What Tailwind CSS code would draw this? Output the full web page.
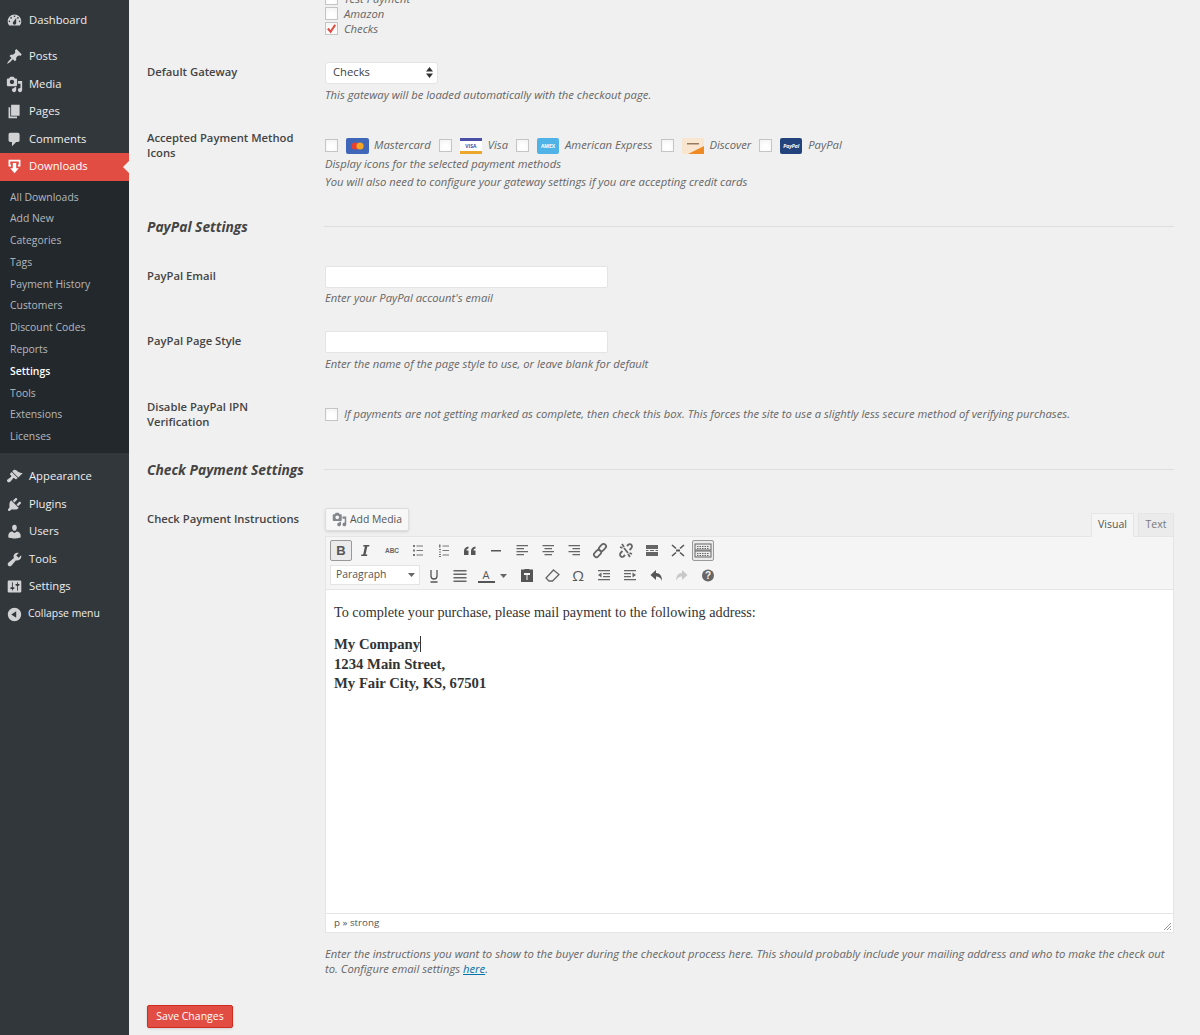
<!DOCTYPE html>
<html lang="en">
<head>
    <meta charset="UTF-8">
    <title>Payment Gateways</title>
    <script src="https://cdn.jsdelivr.net/npm/@tailwindcss/browser@4"></script>
</head>
<body class="bg-[#f0f0f0] font-['Open_Sans',sans-serif] text-[#444] h-[1035px] overflow-hidden">
<div class="flex h-[1035px]">
    <!-- Sidebar -->
    <aside class="w-[129px] shrink-0 bg-[#32373c] text-[#eee] text-[11.25px] pt-[6.5px]">
        <a class="flex items-center h-[27.5px] pl-[6px] gap-[6px]"><svg class="w-[17px] h-[17px] fill-[#d0d2d4]" viewBox="0 0 20 20"><path d="M3.76 16h12.48c1.1-1.37 1.76-3.11 1.76-5 0-4.42-3.58-8-8-8s-8 3.58-8 8c0 1.89.66 3.63 1.76 5zM10 4c.55 0 1 .45 1 1s-.45 1-1 1-1-.45-1-1 .45-1 1-1zM6 6c.55 0 1 .45 1 1s-.45 1-1 1-1-.45-1-1 .45-1 1-1zm8 0c.55 0 1 .45 1 1s-.45 1-1 1-1-.45-1-1 .45-1 1-1zm-5.37 5.55L12 7v6c0 1.1-.9 2-2 2s-2-.9-2-2c0-.57.24-1.08.63-1.45zM4 10c.55 0 1 .45 1 1s-.45 1-1 1-1-.45-1-1 .45-1 1-1zm12 0c.55 0 1 .45 1 1s-.45 1-1 1-1-.45-1-1 .45-1 1-1z"/></svg>Dashboard</a>
        <div class="h-[9px]"></div>
        <a class="flex items-center h-[27.5px] pl-[6px] gap-[6px]"><svg class="w-[17px] h-[17px] fill-[#d0d2d4]" viewBox="0 0 20 20"><path d="M10.44 3.02l1.82-1.82 6.36 6.35-1.83 1.82c-1.05-.68-2.48-.57-3.41.36l-.75.75c-.92.93-1.04 2.35-.35 3.41l-1.83 1.82-2.41-2.41-2.8 2.79c-.42.42-3.38 2.71-3.8 2.29s1.86-3.39 2.28-3.81l2.79-2.79L4.1 9.36l1.83-1.82c1.05.69 2.48.57 3.4-.36l.75-.75c.93-.92 1.05-2.35.36-3.41z"/></svg>Posts</a>
        <a class="flex items-center h-[27.5px] pl-[6px] gap-[6px]"><svg class="w-[17px] h-[17px] fill-[#d0d2d4]" viewBox="0 0 20 20"><path d="M13 11V4c0-.55-.45-1-1-1h-1.67L9 1H5L3.67 3H2c-.55 0-1 .45-1 1v7c0 .55.45 1 1 1h10c.55 0 1-.45 1-1zM7 4.5c1.38 0 2.5 1.12 2.5 2.5S8.38 9.5 7 9.5 4.5 8.38 4.5 7 5.62 4.5 7 4.5zM14 6h5v10.5c0 1.38-1.12 2.5-2.5 2.5S14 17.88 14 16.5s1.12-2.5 2.5-2.5c.17 0 .34.02.5.05V9h-3V6zm-4 8.05V13h2v3.5c0 1.38-1.12 2.5-2.5 2.5S7 17.88 7 16.5 8.12 14 9.5 14c.17 0 .34.02.5.05z"/></svg>Media</a>
        <a class="flex items-center h-[27.5px] pl-[6px] gap-[6px]"><svg class="w-[17px] h-[17px] fill-[#d0d2d4]" viewBox="0 0 20 20"><path d="M6 15V2h10v13H6zm-1 1h8v2H3V5h2v11z"/></svg>Pages</a>
        <a class="flex items-center h-[27.5px] pl-[6px] gap-[6px]"><svg class="w-[17px] h-[17px] fill-[#d0d2d4]" viewBox="0 0 20 20"><path d="M5 2h9c1.1 0 2 .9 2 2v7c0 1.1-.9 2-2 2h-2l-5 5v-5H5c-1.1 0-2-.9-2-2V4c0-1.1.9-2 2-2z"/></svg>Comments</a>
        <a class="relative flex items-center h-[27.5px] pl-[6px] gap-[6px] bg-[#e14d43] text-white"><svg class="w-[17px] h-[17px] fill-white" viewBox="0 0 20 20"><path d="M3 2h14v8h-3V8h1V4H5v4h1v2H3zM8 6h4v6h3l-5 6-5-6h3z"/></svg>Downloads<span class="absolute right-0 top-[8px] border-y-[6px] border-y-transparent border-r-[6px] border-r-[#f0f0f0]"></span></a>
        <!-- Downloads submenu -->
        <ul class="bg-[#23282d] pt-[6px] pb-[6px] text-[10.4px] text-[#b4b9be] h-[272.5px]">
            <li class="h-[21.8px] leading-[21.8px] pl-[10px]">All Downloads</li>
            <li class="h-[21.8px] leading-[21.8px] pl-[10px]">Add New</li>
            <li class="h-[21.8px] leading-[21.8px] pl-[10px]">Categories</li>
            <li class="h-[21.8px] leading-[21.8px] pl-[10px]">Tags</li>
            <li class="h-[21.8px] leading-[21.8px] pl-[10px]">Payment History</li>
            <li class="h-[21.8px] leading-[21.8px] pl-[10px]">Customers</li>
            <li class="h-[21.8px] leading-[21.8px] pl-[10px]">Discount Codes</li>
            <li class="h-[21.8px] leading-[21.8px] pl-[10px]">Reports</li>
            <li class="h-[21.8px] leading-[21.8px] pl-[10px] font-semibold text-white">Settings</li>
            <li class="h-[21.8px] leading-[21.8px] pl-[10px]">Tools</li>
            <li class="h-[21.8px] leading-[21.8px] pl-[10px]">Extensions</li>
            <li class="h-[21.8px] leading-[21.8px] pl-[10px]">Licenses</li>
        </ul>
        <div class="h-[10px]"></div>
        <a class="flex items-center h-[27.5px] pl-[6px] gap-[6px]"><svg class="w-[17px] h-[17px] fill-[#d0d2d4]" viewBox="0 0 20 20"><path d="M14.48 11.06L7.41 3.99l1.5-1.5c.5-.56 2.3-.47 3.51.32 1.21.8 1.43 1.28 2.91 2.1 1.18.64 2.45 1.26 4.45.85zm-.71.71L6.7 4.7 4.93 6.47c-.39.39-.39 1.02 0 1.41l1.06 1.06c.39.39.39 1.03 0 1.42-.6.6-1.43 1.11-2.21 1.69-.35.26-.7.53-1.01.84C1.43 13.23.4 14.75 1.77 16.12c1.37 1.37 2.89.34 4.15-.92.31-.31.58-.66.84-1.01.58-.78 1.09-1.61 1.69-2.21.39-.39 1.03-.39 1.42 0l1.06 1.06c.39.39 1.02.39 1.41 0z"/></svg>Appearance</a>
        <a class="flex items-center h-[27.5px] pl-[6px] gap-[6px]"><svg class="w-[17px] h-[17px] fill-[#d0d2d4]" viewBox="0 0 20 20"><path d="M13.11 4.36L9.87 7.6 8 5.73l3.24-3.24c.35-.34 1.05-.2 1.56.32.52.51.66 1.21.31 1.55zm-8 1.77l.91-1.12 9.01 9.01-1.19.84c-.71.71-2.63 1.16-3.82 1.16H6.14L4.9 17.26c-.59.59-1.54.59-2.12 0-.59-.58-.59-1.53 0-2.12l1.24-1.24v-3.88c0-1.13.4-3.19 1.09-3.89zm7.26 3.97l3.24-3.24c.34-.35 1.04-.21 1.55.31.52.51.66 1.21.31 1.55l-3.24 3.25z"/></svg>Plugins</a>
        <a class="flex items-center h-[27.5px] pl-[6px] gap-[6px]"><svg class="w-[17px] h-[17px] fill-[#d0d2d4]" viewBox="0 0 20 20"><path d="M10 9.25c-2.27 0-2.73-3.44-2.73-3.44C7 4.02 7.82 2 9.97 2c2.16 0 2.98 2.02 2.71 3.81 0 0-.41 3.44-2.68 3.44zm0 2.57L12.72 10c2.39 0 4.52 2.33 4.52 4.53v2.49s-3.65 1.13-7.24 1.13c-3.65 0-7.24-1.13-7.24-1.13v-2.49c0-2.25 1.94-4.48 4.47-4.48z"/></svg>Users</a>
        <a class="flex items-center h-[27.5px] pl-[6px] gap-[6px]"><svg class="w-[17px] h-[17px] fill-[#d0d2d4]" viewBox="0 0 20 20"><path d="M16.68 9.77c-1.34 1.34-3.3 1.67-4.95.99l-5.41 6.52c-.99.99-2.59.99-3.58 0s-.99-2.59 0-3.57l6.52-5.42c-.68-1.65-.35-3.61.99-4.95 1.28-1.28 3.12-1.62 4.72-1.06l-2.89 2.89 2.82 2.82 2.86-2.87c.53 1.58.18 3.39-1.08 4.65z"/></svg>Tools</a>
        <a class="flex items-center h-[27.5px] pl-[6px] gap-[6px]"><svg class="w-[17px] h-[17px] fill-[#d0d2d4]" viewBox="0 0 20 20"><path d="M18 16V4c0-.55-.45-1-1-1H3c-.55 0-1 .45-1 1v12c0 .55.45 1 1 1h14c.55 0 1-.45 1-1zM8 11h1c.55 0 1 .45 1 1s-.45 1-1 1H8v1.5c0 .28-.22.5-.5.5s-.5-.22-.5-.5V13H6c-.55 0-1-.45-1-1s.45-1 1-1h1V5.5c0-.28.22-.5.5-.5s.5.22.5.5V11zm5-2h-1c-.55 0-1-.45-1-1s.45-1 1-1h1V5.5c0-.28.22-.5.5-.5s.5.22.5.5V7h1c.55 0 1 .45 1 1s-.45 1-1 1h-1v5.5c0 .28-.22.5-.5.5s-.5-.22-.5-.5V9z"/></svg>Settings</a>
        <a class="flex items-center h-[27.5px] pl-[6px] gap-[5px] text-[10.4px]"><svg class="w-[17px] h-[17px] fill-[#d0d2d4]" viewBox="0 0 20 20"><path d="M10 2.16c4.33 0 7.84 3.51 7.84 7.84s-3.51 7.84-7.84 7.84S2.16 14.33 2.16 10 5.71 2.16 10 2.16zm2 11.72V6.12L6.18 9.97z"/></svg>Collapse menu</a>
    </aside>

    <!-- Settings form -->
    <main class="flex-1 pl-[18px] pr-[26px] text-[11.25px] overflow-hidden">
        <!-- Gateways, cut off by the scroll -->
        <div class="grid grid-cols-[178px_1fr] mt-[-9.5px]">
            <div></div>
            <div class="italic text-[#666] leading-[15px]">
                <label class="flex items-center gap-[6px] h-[15px]"><span class="w-[13px] h-[13px] bg-white border border-[#c5c5c5] shadow-inner"></span>Test Payment</label>
                <label class="flex items-center gap-[6px] h-[15px]"><span class="w-[13px] h-[13px] bg-white border border-[#c5c5c5] shadow-inner"></span>Amazon</label>
                <label class="flex items-center gap-[6px] h-[15px]"><span class="w-[13px] h-[13px] bg-white border border-[#c5c5c5] shadow-inner flex items-center justify-center"><svg class="w-[11px] h-[11px] fill-none stroke-[#e14d43] stroke-[2.2]" viewBox="0 0 12 12"><path d="M2 6l3 3.5L10 2"/></svg></span>Checks</label>
            </div>
        </div>

        <div class="grid grid-cols-[178px_1fr] mt-[26.5px]">
            <div class="font-semibold leading-[15px] mt-[2px]">Default Gateway</div>
            <div>
                <div class="w-[113px] h-[22px] bg-white border border-[#e4e4e4] rounded-[3px] flex items-center justify-between pl-[7px] pr-[4px] pb-[1px]">Checks<svg class="w-[7px] h-[11px] fill-[#333]" viewBox="0 0 7 11"><path d="M3.5 0L7 4.5H0zM3.5 11L0 6.5h7z"/></svg></div>
                <p class="italic text-[#666] leading-[15px] mt-[2.5px]">This gateway will be loaded automatically with the checkout page.</p>
            </div>
        </div>

        <div class="grid grid-cols-[178px_1fr] mt-[29px]">
            <div class="font-semibold leading-[14.5px] mt-[0.5px]">Accepted Payment Method<br>Icons</div>
            <div class="italic text-[#666] mt-[5px]">
                <div class="flex items-center h-[20.5px]">
                    <span class="w-[13px] h-[13px] bg-white border border-[#c5c5c5] shadow-inner"></span>
                    <svg class="ml-[8px] w-[23px] h-[16px]" viewBox="0 0 23 16"><rect width="23" height="16" rx="2" fill="#3f66b8"/><circle cx="9" cy="8" r="3.6" fill="#e8402f"/><circle cx="14" cy="8" r="3.6" fill="#f6a623"/></svg>
                    <span class="ml-[5px]">Mastercard</span>
                    <span class="ml-[8px] w-[13px] h-[13px] bg-white border border-[#c5c5c5] shadow-inner"></span>
                    <span class="ml-[8px] w-[22px] h-[16px] flex flex-col bg-white not-italic"><span class="h-[3px] bg-[#4b4fa6]"></span><span class="flex-1 text-[5px] leading-[10px] text-center font-bold text-[#4b4fa6]">VISA</span><span class="h-[3px] bg-[#eba62b]"></span></span>
                    <span class="ml-[6px]">Visa</span>
                    <span class="ml-[8px] w-[13px] h-[13px] bg-white border border-[#c5c5c5] shadow-inner"></span>
                    <span class="ml-[8px] w-[22px] h-[16px] rounded-[2px] bg-[#4fb3e8] text-white text-[5px] leading-[16px] text-center font-bold not-italic">AMEX</span>
                    <span class="ml-[6px]">American Express</span>
                    <span class="ml-[9px] w-[13px] h-[13px] bg-white border border-[#c5c5c5] shadow-inner"></span>
                    <svg class="ml-[8px] w-[22px] h-[16px]" viewBox="0 0 22 16"><rect width="22" height="16" fill="#f9e6d0"/><path d="M6 16L22 8v8z" fill="#f08a24"/><rect x="5" y="5" width="12" height="1.5" fill="#9a7a5c"/></svg>
                    <span class="ml-[5px]">Discover</span>
                    <span class="ml-[8px] w-[13px] h-[13px] bg-white border border-[#c5c5c5] shadow-inner"></span>
                    <span class="ml-[8px] w-[22px] h-[16px] rounded-[2px] bg-[#22437c] text-white text-[5px] leading-[16px] text-center font-bold">PayPal</span>
                    <span class="ml-[6px]">PayPal</span>
                </div>
                <p class="leading-[15px]">Display icons for the selected payment methods</p>
                <p class="leading-[15px] mt-[2.5px]">You will also need to configure your gateway settings if you are accepting credit cards</p>
            </div>
        </div>

        <div class="grid grid-cols-[177px_1fr] mt-[28.5px] h-[20px]">
            <h3 class="text-[13.8px] leading-[20px] font-bold italic text-[#444]">PayPal Settings</h3>
            <div class="mt-[9px] h-px bg-[#dedede]"></div>
        </div>

        <div class="grid grid-cols-[178px_1fr] mt-[29px]">
            <div class="font-semibold leading-[15px] mt-[2px]">PayPal Email</div>
            <div>
                <div class="w-[283px] h-[22px] bg-white border border-[#e4e4e4] rounded-[2px]"></div>
                <p class="italic text-[#666] leading-[15px] mt-[1.5px]">Enter your PayPal account's email</p>
            </div>
        </div>

        <div class="grid grid-cols-[178px_1fr] mt-[26.5px]">
            <div class="font-semibold leading-[15px] mt-[2px]">PayPal Page Style</div>
            <div>
                <div class="w-[283px] h-[22px] bg-white border border-[#e4e4e4] rounded-[2px]"></div>
                <p class="italic text-[#666] leading-[15px] mt-[2.5px]">Enter the name of the page style to use, or leave blank for default</p>
            </div>
        </div>

        <div class="grid grid-cols-[178px_1fr] mt-[29.5px]">
            <div class="font-semibold leading-[14.5px]">Disable PayPal IPN<br>Verification</div>
            <label class="flex items-center gap-[6px] h-[16px] mt-[6px] italic text-[#666]"><span class="w-[13px] h-[13px] bg-white border border-[#c5c5c5] shadow-inner"></span>If payments are not getting marked as complete, then check this box. This forces the site to use a slightly less secure method of verifying purchases.</label>
        </div>

        <div class="grid grid-cols-[177px_1fr] mt-[31px] h-[20px]">
            <h3 class="text-[13.8px] leading-[20px] font-bold italic text-[#444]">Check Payment Settings</h3>
            <div class="mt-[9px] h-px bg-[#dedede]"></div>
        </div>

        <div class="grid grid-cols-[178px_1fr] mt-[28px]">
            <div class="font-semibold leading-[15px] mt-[3px]">Check Payment Instructions</div>
            <div>
                <div class="flex justify-between items-end h-[28px]">
                    <button class="self-start h-[23px] w-[84px] bg-[#f7f7f7] border border-[#ddd] rounded-[2px] shadow-sm text-[10.4px] text-[#555] flex items-center pl-[6px] gap-[3px]"><svg class="w-[15px] h-[15px] fill-[#82878c]" viewBox="0 0 20 20"><path d="M13 11V4c0-.55-.45-1-1-1h-1.67L9 1H5L3.67 3H2c-.55 0-1 .45-1 1v7c0 .55.45 1 1 1h10c.55 0 1-.45 1-1zM7 4.5c1.38 0 2.5 1.12 2.5 2.5S8.38 9.5 7 9.5 4.5 8.38 4.5 7 5.62 4.5 7 4.5zM14 6h5v10.5c0 1.38-1.12 2.5-2.5 2.5S14 17.88 14 16.5s1.12-2.5 2.5-2.5c.17 0 .34.02.5.05V9h-3V6zm-4 8.05V13h2v3.5c0 1.38-1.12 2.5-2.5 2.5S7 17.88 7 16.5 8.12 14 9.5 14c.17 0 .34.02.5.05z"/></svg>Add Media</button>
                    <div class="flex gap-[4px] text-[10.5px] text-[#777]">
                        <span class="h-[24px] w-[43px] bg-[#f5f5f5] border border-[#e5e5e5] border-b-[#f5f5f5] -mb-px leading-[21px] text-center text-[#555]">Visual</span>
                        <span class="h-[24px] w-[36px] bg-[#ebebeb] border border-[#e5e5e5] -mb-px leading-[21px] text-center">Text</span>
                    </div>
                </div>
                <div class="border border-[#e5e5e5] bg-white">
                    <!-- Toolbar -->
                    <div class="h-[53px] bg-[#f5f5f5] border-b border-[#e5e5e5] pl-[4px] pt-[1px]">
                        <div class="flex items-center h-[24px]">
                            <span class="w-[22px] h-[21px] bg-[#ebebeb] border border-[#999] rounded-[2px] font-bold text-[13px] leading-[19px] text-center text-[#555] font-['Liberation_Sans',sans-serif]">B</span>
                            <svg class="ml-[1px] w-[26px] h-[17px] fill-[#555]" viewBox="0 0 26 17"><path d="M10.5 3h6l-.4 1.5h-1.800l-1.700 8h1.800l-.4 1.500h-6l.4-1.500h1.800l1.700-8h-1.800z"/></svg>
                            <svg class="w-[26px] h-[17px]" viewBox="0 0 26 17"><text x="13" y="11" text-anchor="middle" font-size="6.5" font-weight="700" fill="#666" font-family="Liberation Sans">ABC</text></svg>
                            <svg class="w-[26px] h-[17px] fill-[#777]" viewBox="0 0 26 17"><path d="M8 3h2v2H8zM8 7.500h2v2H8zM8 12h2v2H8zM11.500 3.500H18v1h-6.500zM11.500 8H18v1h-6.500zM11.500 12.500H18v1h-6.500z"/></svg>
                            <svg class="w-[26px] h-[17px] fill-[#777]" viewBox="0 0 26 17"><path d="M8 2.500h1.500v3H8zM8 7h2v1H8zM8 9.500h2v1H8zM8 12h2v1H8zM8 14h2v1H8zM11.500 3.500H18v1h-6.500zM11.500 8H18v1h-6.500zM11.500 12.500H18v1h-6.500z"/></svg>
                            <svg class="w-[26px] h-[17px] fill-[#555]" viewBox="0 0 26 17"><path d="M11.500 4.500v2c-1.500.4-2 1-2 2h2v4.500H7V9c0-2.500 1.800-4.200 4.500-4.500zM18.500 4.500v2c-1.500.4-2 1-2 2h2v4.500H14V9c0-2.500 1.800-4.200 4.500-4.500z"/></svg>
                            <svg class="w-[26px] h-[17px] fill-[#555]" viewBox="0 0 26 17"><path d="M8 8h10v1.500H8z"/></svg>
                            <svg class="w-[26px] h-[17px] fill-[#666]" viewBox="0 0 26 17"><path d="M7.500 3H19v1.300H7.500zM7.500 6H15v1.300H7.500zM7.500 9H19v1.300H7.500zM7.500 12H15v1.300H7.500z"/></svg>
                            <svg class="w-[26px] h-[17px] fill-[#666]" viewBox="0 0 26 17"><path d="M7.500 3H19v1.300H7.500zM9.500 6H17v1.300H9.500zM7.500 9H19v1.300H7.500zM9.500 12H17v1.300H9.500z"/></svg>
                            <svg class="w-[26px] h-[17px] fill-[#666]" viewBox="0 0 26 17"><path d="M7.500 3H19v1.300H7.500zM11.500 6H19v1.300h-7.500zM7.500 9H19v1.300H7.500zM11.500 12H19v1.300h-7.500z"/></svg>
                            <svg class="w-[26px] h-[17px] fill-none stroke-[#666] stroke-[1.8]" viewBox="0 0 26 17"><rect x="13" y="1.500" width="5" height="8" rx="2.500" transform="rotate(45 15.500 5.500)"/><rect x="8" y="7.500" width="5" height="8" rx="2.500" transform="rotate(45 10.500 11.500)"/></svg>
                            <svg class="w-[26px] h-[17px] fill-none stroke-[#666] stroke-[1.8]" viewBox="0 0 26 17"><path d="M14 4l1.500-1.500c1.500-1 3.500 0 3.500 2 0 1-.5 1.500-1 2L16.500 8M12 13l-1.500 1.500c-1.500 1-3.500 0-3.500-2 0-1 .5-1.500 1-2L9.500 9M9 2l2 3M7 5l2.500 1M17 15l-2-3M19 12l-2.500-1M11 6l4 5"/></svg>
                            <svg class="w-[26px] h-[17px] fill-[#666]" viewBox="0 0 26 17"><path d="M7 3h12v4H7zM7 8h2.500v1H7zM11 8h4v1h-4zM16.500 8H19v1h-2.500zM7 10h12v4H7z"/></svg>
                            <svg class="w-[26px] h-[17px] fill-none stroke-[#555] stroke-[1.6]" viewBox="0 0 26 17"><path d="M7 3l4 3.500M19 3l-4 3.500M7 14l4-3.500M19 14l-4-3.500"/><path d="M11 7.500h4v2h-4z" class="fill-[#555] stroke-none"/></svg>
                            <span class="ml-[1px] w-[22px] h-[21px] bg-[#ebebeb] border border-[#999] rounded-[2px] flex items-center justify-center"><svg class="w-[18px] h-[15px] fill-none stroke-[#666]" viewBox="0 0 18 15"><rect x="1" y="1" width="16" height="6"/><rect x="1" y="8" width="16" height="6"/><path d="M3 3.500h12M3 5.500h12M3 10.500h12M3 12.500h12" stroke-dasharray="1.500 1"/></svg></span>
                        </div>
                        <div class="flex items-center h-[24px] mt-[1px]">
                            <span class="w-[90px] h-[20px] bg-white border border-[#e4e4e4] flex items-center justify-between pl-[5px] pr-[4px] text-[10.4px] text-[#555]">Paragraph<svg class="w-[7px] h-[4px] fill-[#666]" viewBox="0 0 7 4"><path d="M0 0h7L3.500 4z"/></svg></span>
                            <svg class="ml-[1px] w-[26px] h-[17px] fill-none stroke-[#555] stroke-[1.3]" viewBox="0 0 26 17"><path d="M10 3v6c0 4 6 4 6 0V3M9.500 15h7"/></svg>
                            <svg class="w-[26px] h-[17px] fill-[#666]" viewBox="0 0 26 17"><path d="M6.500 3H19.500v1.500H6.500zM6.500 6.500H19.500V8H6.500zM6.500 10H19.500v1.500H6.500zM6.500 13.500H19.500V15H6.500z"/></svg>
                            <span class="w-[26px] flex flex-col items-center text-[11px] leading-[13px] text-[#555]"><span class="border-b-2 border-[#555] w-[17px] text-center">A</span></span>
                            <svg class="w-[10px] h-[17px] fill-[#666]" viewBox="0 0 10 17"><path d="M1 7h7l-3.500 4z"/></svg>
                            <svg class="ml-[5px] w-[26px] h-[17px] fill-[#555]" viewBox="0 0 26 17"><path d="M10.500 2.500V2h5v.5H19V15H7V2.500zM10 6v2h2.500v5h1V8H16V6z"/></svg>
                            <svg class="-ml-[1px] w-[26px] h-[17px] fill-none stroke-[#666] stroke-[1.3]" viewBox="0 0 26 17"><path d="M14.500 3L20 7.500l-6.500 6.500H10L7 11z"/></svg>
                            <span class="w-[26px] text-center text-[15px] leading-[17px] text-[#555]">Ω</span>
                            <svg class="w-[26px] h-[17px] fill-[#666]" viewBox="0 0 26 17"><path d="M7 3h12v1.200H7zM12 6h7v1.200h-7zM12 9h7v1.200h-7zM7 12h12v1.200H7zM10.500 5.500v5L7 8z"/></svg>
                            <svg class="w-[26px] h-[17px] fill-[#666]" viewBox="0 0 26 17"><path d="M7 3h12v1.200H7zM7 6h7v1.200H7zM7 9h7v1.200H7zM7 12h12v1.200H7zM15.500 5.500v5L19 8z"/></svg>
                            <svg class="w-[26px] h-[17px] fill-[#555]" viewBox="0 0 26 17"><path d="M13 3v3c4 0 6 3 6 8-1-3-3-4.500-6-4.500V13L7.500 8z"/></svg>
                            <svg class="w-[26px] h-[17px] fill-[#c8c8c8]" viewBox="0 0 26 17"><path d="M13 3v3c-4 0-6 3-6 8 1-3 3-4.500 6-4.500V13l5.500-5z"/></svg>
                            <svg class="w-[26px] h-[17px]" viewBox="0 0 26 17"><circle cx="13" cy="8.500" r="6" fill="#666"/><text x="13" y="12" text-anchor="middle" font-size="10" font-weight="700" fill="#f5f5f5" font-family="Liberation Sans">?</text></svg>
                        </div>
                    </div>
                    <!-- Editor body -->
                    <div class="h-[323px] px-[8px] pt-[13px] font-['Liberation_Serif',serif] text-[14.2px] leading-[19.5px] text-[#333]">
                        <p>To complete your purchase, please mail payment to the following address:</p>
                        <p class="mt-[12.5px] font-bold text-[14.7px]"><span class="border-r border-[#333]">My Company</span><br>1234 Main Street,<br>My Fair City, KS, 67501</p>
                    </div>
                    <div class="relative h-[19px] border-t border-[#e5e5e5] pl-[8px] text-[9.8px] leading-[17px] text-[#555]">p » strong
                        <svg class="absolute right-[2px] bottom-[2px] w-[7px] h-[7px] stroke-[#999]" viewBox="0 0 7 7"><path d="M7 0L0 7M7 3L3 7M7 6L6 7"/></svg>
                    </div>
                </div>
                <p class="italic text-[#666] leading-[15px] mt-[12.5px]">Enter the instructions you want to show to the buyer during the checkout process here. This should probably include your mailing address and who to make the check out to. Configure email settings <a class="text-[#0073aa] underline">here</a>.</p>
            </div>
        </div>

        <button class="block mt-[29.5px] w-[86px] h-[23px] bg-[#e14d43] border border-[#d02a21] rounded-[2px] text-white text-[10.5px] shadow-sm">Save Changes</button>
    </main>
</div>
</body>
</html>
